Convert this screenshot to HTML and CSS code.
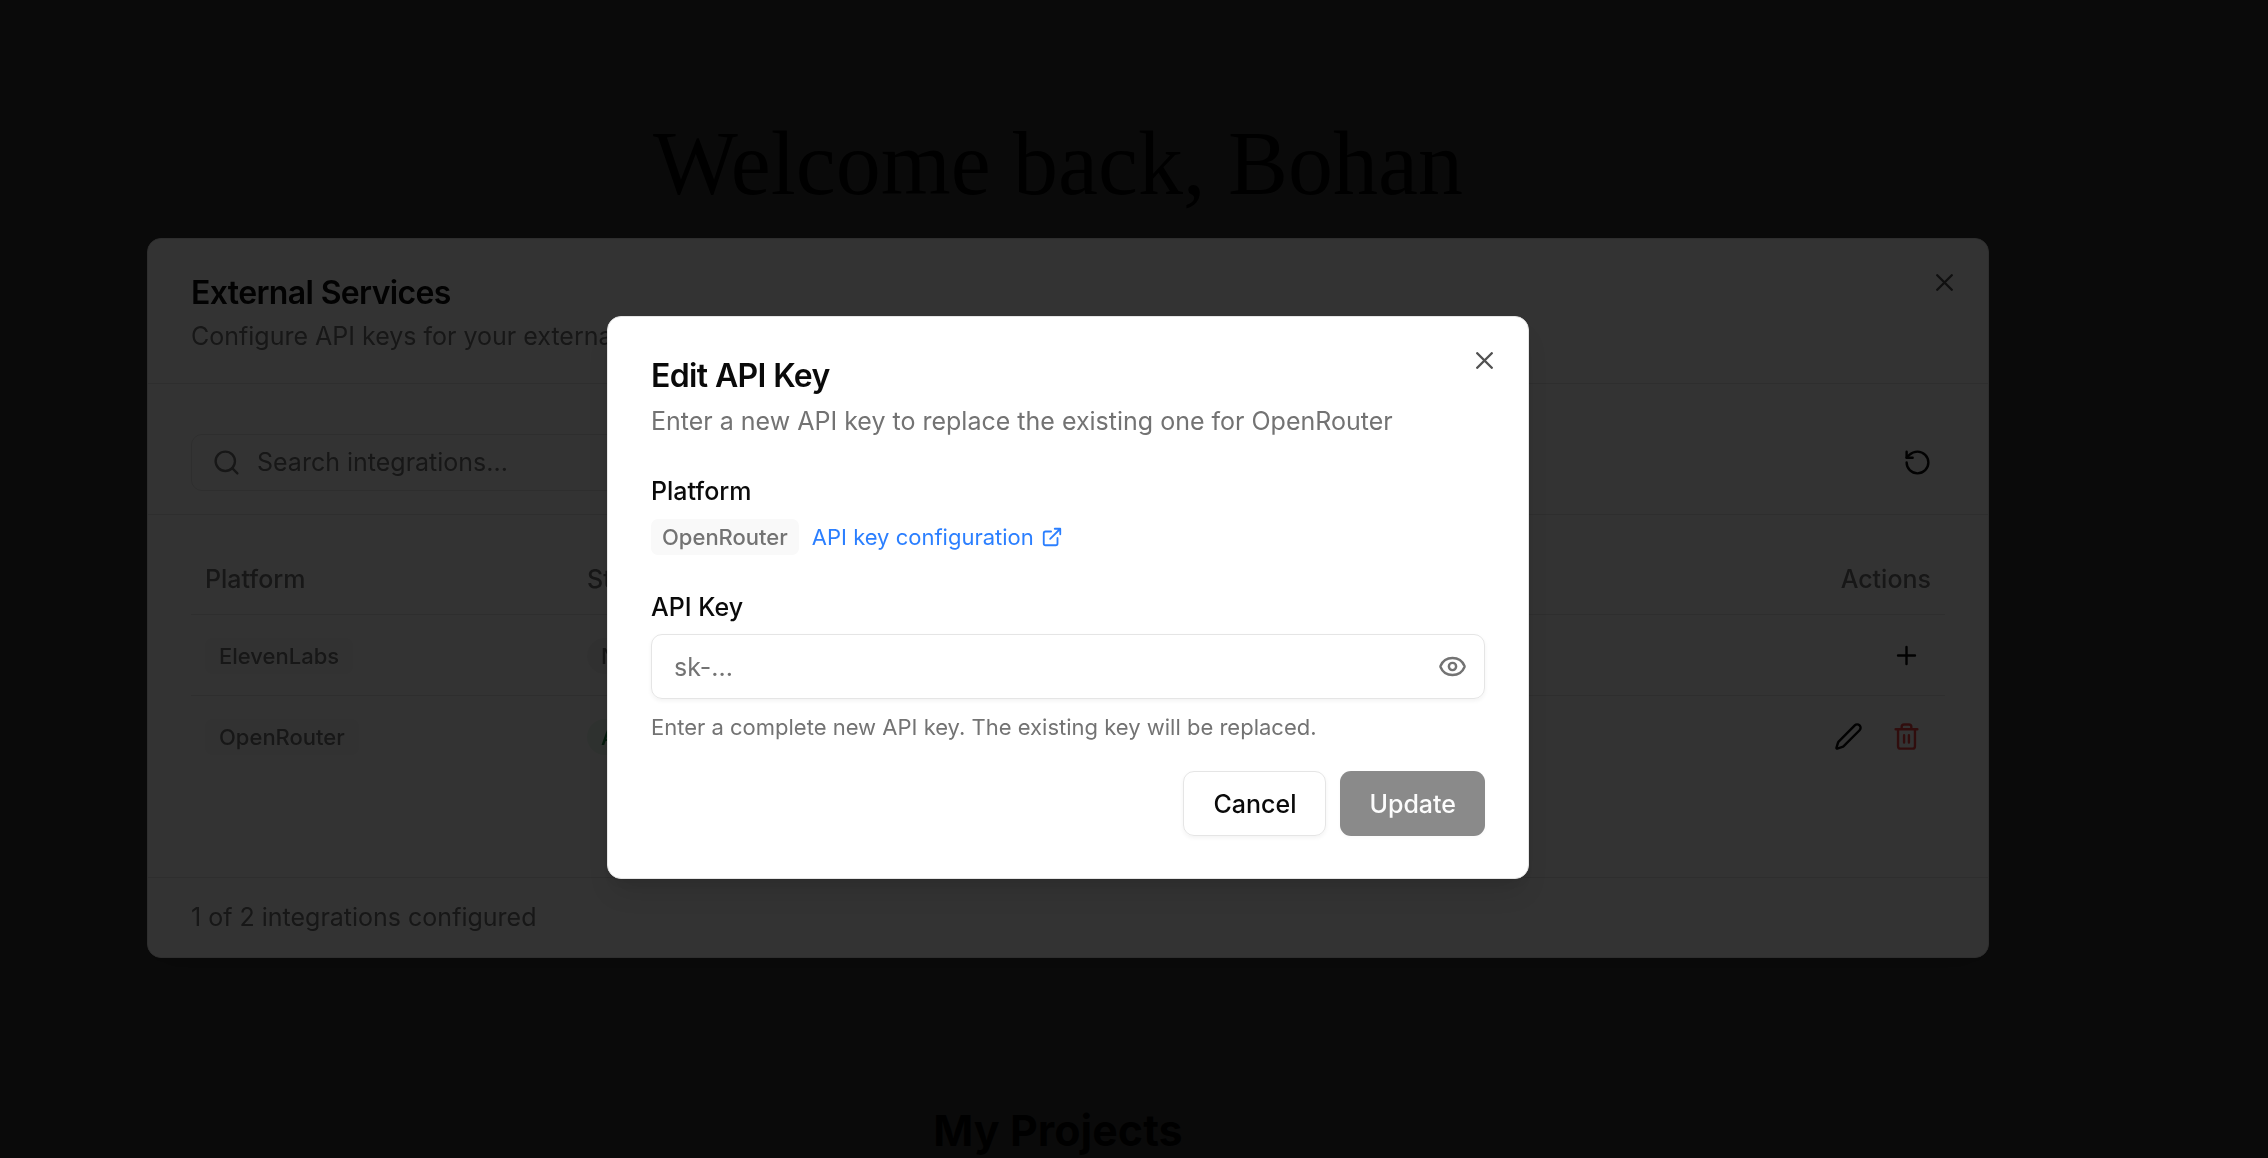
FILE: index.html
```html
<!DOCTYPE html>
<html lang="en">
<head>
<meta charset="utf-8">
<meta name="viewport" content="width=device-width, initial-scale=1">
<title>External Services</title>
<link rel="stylesheet" href="styles.css">
</head>
<body>
<main class="page">
  <h1 class="welcome">Welcome back, Bohan</h1>
  <h2 class="projects-title">My Projects</h2>
</main>

<div class="overlay">
  <section class="dialog services" role="dialog" aria-labelledby="services-title">
    <header class="services-header">
      <h2 class="dialog-title" id="services-title">External Services</h2>
      <p class="dialog-text">Configure API keys for your external services</p>
    </header>
    <div class="toolbar">
      <div class="search">
        <svg class="icon" viewBox="0 0 24 24" aria-hidden="true"><circle cx="11" cy="11" r="8"/><path d="m21 21-4.3-4.3"/></svg>
        <input class="search-input" type="text" aria-label="Search integrations" placeholder="Search integrations...">
      </div>
      <button class="icon-button" type="button" aria-label="Refresh">
        <svg class="icon" viewBox="0 0 24 24" aria-hidden="true"><path d="M3 12a9 9 0 1 0 9-9 9.75 9.75 0 0 0-6.74 2.74L3 8"/><path d="M3 3v5h5"/></svg>
      </button>
    </div>
    <div class="services-body">
      <table class="services-table">
        <thead>
          <tr><th class="col-platform" scope="col">Platform</th><th scope="col">Status</th><th class="col-actions" scope="col">Actions</th></tr>
        </thead>
        <tbody>
          <tr>
            <td><span class="tag tag-wide">ElevenLabs</span></td>
            <td><span class="tag tag-wide pill">Not configured</span></td>
            <td>
              <div class="actions">
                <button class="icon-button" type="button" aria-label="Add ElevenLabs key">
                  <svg class="icon" viewBox="0 0 24 24" aria-hidden="true"><path d="M5 12h14M12 5v14"/></svg>
                </button>
              </div>
            </td>
          </tr>
          <tr>
            <td><span class="tag tag-wide">OpenRouter</span></td>
            <td><span class="tag tag-wide pill pill-active">Active</span></td>
            <td>
              <div class="actions">
                <button class="icon-button" type="button" aria-label="Edit OpenRouter key">
                  <svg class="icon" viewBox="0 0 24 24" aria-hidden="true"><path d="M21.174 6.812a1 1 0 0 0-3.986-3.987L3.842 16.174a2 2 0 0 0-.5.83l-1.321 4.352a.5.5 0 0 0 .623.622l4.353-1.32a2 2 0 0 0 .83-.497z"/></svg>
                </button>
                <button class="icon-button danger" type="button" aria-label="Delete OpenRouter key">
                  <svg class="icon" viewBox="0 0 24 24" aria-hidden="true"><path d="M3 6h18M19 6v14a2 2 0 0 1-2 2H7a2 2 0 0 1-2-2V6M8 6V4a2 2 0 0 1 2-2h4a2 2 0 0 1 2 2v2M10 11v6M14 11v6"/></svg>
                </button>
              </div>
            </td>
          </tr>
        </tbody>
      </table>
    </div>
    <footer class="services-footer">
      <p class="dialog-text">1 of 2 integrations configured</p>
    </footer>
    <button class="close" type="button" aria-label="Close External Services">
      <svg class="icon" viewBox="0 0 24 24" aria-hidden="true"><path d="M18 6 6 18M6 6l12 12"/></svg>
    </button>
  </section>
</div>

<div class="overlay">
  <form class="dialog edit" role="dialog" aria-modal="true" aria-labelledby="edit-title">
    <header class="edit-header">
      <h2 class="dialog-title" id="edit-title">Edit API Key</h2>
      <p class="dialog-text">Enter a new API key to replace the existing one for OpenRouter</p>
    </header>
    <div class="field">
      <p class="label">Platform</p>
      <div class="platform">
        <span class="tag">OpenRouter</span>
        <a class="config-link" href="#">API key configuration
          <svg class="icon icon-small" viewBox="0 0 24 24" aria-hidden="true"><path d="M15 3h6v6M10 14 21 3M18 13v6a2 2 0 0 1-2 2H5a2 2 0 0 1-2-2V8a2 2 0 0 1 2-2h6"/></svg>
        </a>
      </div>
    </div>
    <div class="field">
      <label class="label" for="api-key">API Key</label>
      <div class="key-box">
        <input class="key-input" id="api-key" type="password" placeholder="sk-...">
        <button class="reveal" type="button" aria-label="Show key">
          <svg class="icon" viewBox="0 0 24 24" aria-hidden="true"><path d="M2.062 12.348a1 1 0 0 1 0-.696 10.75 10.75 0 0 1 19.876 0 1 1 0 0 1 0 .696 10.75 10.75 0 0 1-19.876 0"/><circle cx="12" cy="12" r="3"/></svg>
        </button>
      </div>
      <p class="hint">Enter a complete new API key. The existing key will be replaced.</p>
    </div>
    <div class="buttons">
      <button class="button" type="button">Cancel</button>
      <button class="button primary" type="submit" disabled>Update</button>
    </div>
    <button class="close" type="button" aria-label="Close">
      <svg class="icon" viewBox="0 0 24 24" aria-hidden="true"><path d="M18 6 6 18M6 6l12 12"/></svg>
    </button>
  </form>
</div>
</body>
</html>
```
FILE: styles.css
```css
:root {
  --ink: #0a0a0a;
  --muted: #737373;
  --line: #e5e5e5;
  --soft: #f9f9f9;
}

* { box-sizing: border-box; }

body {
  margin: 0;
  background: #fff;
  color: var(--ink);
  font: 400 25px/36px Inter, "Liberation Sans", sans-serif;
  font-optical-sizing: none;
  overflow: hidden;
}

h1, h2, p { margin: 0; }

button, input { font: inherit; color: inherit; }

button {
  padding: 0;
  border: 0;
  background: none;
}

.page {
  display: flex;
  flex-direction: column;
  align-items: center;
  gap: 890px;
  height: 100vh;
  padding: 110px 152px 0 0;
}

.welcome {
  flex: none;
  font: 400 90px/108px Georgia, "Liberation Serif", serif;
}

.projects-title {
  flex: none;
  font-size: 43px;
  font-weight: 700;
  line-height: 44px;
}

/* Modal layers */

.overlay {
  position: fixed;
  inset: 0;
  display: flex;
  align-items: center;
  justify-content: center;
  padding: 37px 132px 0 0;
  background: rgba(0, 0, 0, 0.8);
}

.dialog {
  position: relative;
  display: flex;
  flex-direction: column;
  width: 100%;
  border: 1px solid var(--line);
  border-radius: 14px;
  background: #fff;
  box-shadow: 0 18px 27px -6px rgba(0, 0, 0, 0.1), 0 8px 12px -8px rgba(0, 0, 0, 0.1);
}

.dialog-title {
  font-size: 32px;
  font-weight: 600;
  line-height: 32px;
  letter-spacing: -0.02em;
}

.dialog-text { color: var(--muted); }

.icon {
  display: block;
  flex: none;
  width: 29px;
  height: 29px;
  fill: none;
  stroke: currentColor;
  stroke-width: 2;
  stroke-linecap: round;
  stroke-linejoin: round;
}

.icon-small { width: 22px; height: 22px; }

.close {
  position: absolute;
  top: 29px;
  right: 29px;
  opacity: 0.7;
}

.icon-button {
  display: flex;
  align-items: center;
  justify-content: center;
  width: 50px;
  height: 50px;
}

.danger { color: #ef4444; }

.tag {
  display: inline-block;
  padding: 0 11px;
  border-radius: 7px;
  background: var(--soft);
  color: var(--muted);
  font-size: 22px;
  font-weight: 500;
  line-height: 36px;
}

.tag-wide { padding: 0 14px; }

.pill { border-radius: 18px; background: #f5f5f5; }

.pill-active { background: #ebf7ef; color: #15803d; }

/* External services */

.services { max-width: 1842px; }

.services-header {
  display: flex;
  flex-direction: column;
  gap: 9px;
  padding: 38px 43px 29px;
  border-bottom: 1px solid var(--line);
}

.toolbar {
  display: flex;
  align-items: center;
  justify-content: space-between;
  padding: 50px 56px 23px 43px;
  border-bottom: 1px solid var(--line);
}

.toolbar .icon-button { width: 29px; }

.search {
  display: flex;
  align-items: center;
  gap: 16px;
  width: 691px;
  height: 57px;
  padding: 0 20px;
  border: 1px solid var(--line);
  border-radius: 11px;
  color: var(--muted);
}

.search-input, .key-input {
  flex: 1;
  min-width: 0;
  padding: 0;
  border: 0;
  outline: 0;
  background: none;
}

.search-input::placeholder, .key-input::placeholder {
  color: var(--muted);
  opacity: 1;
}

.services-body { padding: 29px 43px 100px; }

.services-table {
  width: 100%;
  border-collapse: collapse;
  table-layout: fixed;
}

.services-table th {
  height: 71px;
  padding: 0 14px;
  color: var(--muted);
  font-weight: 500;
  text-align: left;
}

.services-table td {
  height: 81px;
  padding: 0 14px;
}

.services-table thead tr, .services-table tbody tr:first-child {
  border-bottom: 1px solid var(--line);
}

.services-table .col-platform { width: 382px; }

.services-table .col-actions { text-align: right; }

.actions {
  display: flex;
  justify-content: flex-end;
  gap: 8px;
}

.services-footer {
  padding: 21px 43px 22px;
  border-top: 1px solid var(--line);
}

/* Edit API key */

.edit {
  gap: 39px;
  max-width: 922px;
  padding: 43px 43px 42px;
}

.edit-header {
  display: flex;
  flex-direction: column;
  gap: 11px;
}

.field {
  display: flex;
  flex-direction: column;
  gap: 14px;
}

.label {
  font-weight: 500;
  line-height: 26px;
}

.platform {
  display: flex;
  align-items: center;
  gap: 13px;
  min-height: 37px;
}

.config-link {
  display: flex;
  align-items: center;
  gap: 7px;
  color: #2b7fff;
  font-size: 22px;
  text-decoration: none;
}

.key-box {
  display: flex;
  align-items: center;
  height: 65px;
  padding: 0 17px 0 22px;
  border: 1px solid var(--line);
  border-radius: 11px;
  box-shadow: 0 2px 4px rgba(0, 0, 0, 0.05);
}

.reveal { color: var(--muted); }

.hint {
  color: var(--muted);
  font-size: 22px;
  line-height: 28px;
}

.buttons {
  display: flex;
  justify-content: flex-end;
  gap: 14px;
  margin-top: -9px;
}

.button {
  height: 65px;
  padding: 0 29px;
  border: 1px solid var(--line);
  border-radius: 11px;
  box-shadow: 0 2px 4px rgba(0, 0, 0, 0.05);
  font-weight: 500;
}

.primary {
  border: 0;
  background: #171717;
  color: #fafafa;
  opacity: 0.5;
}
```
